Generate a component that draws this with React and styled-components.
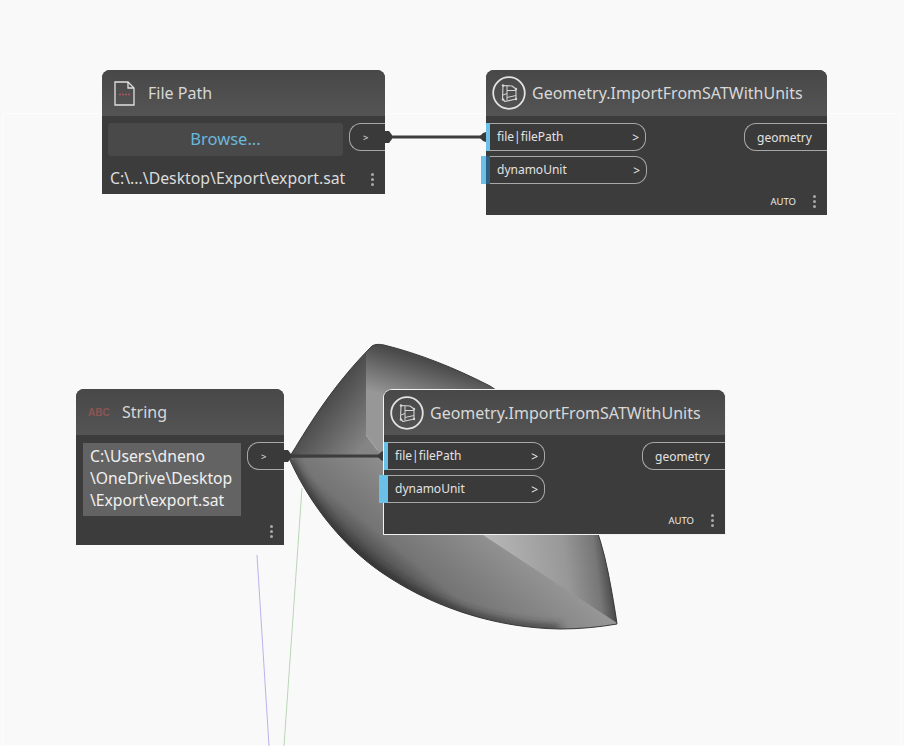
import React from "react";
import styled, { createGlobalStyle } from "styled-components";

const GlobalStyle = createGlobalStyle`
  html, body {
    margin: 0;
    padding: 0;
    background: #f9f9f9;
  }
`;

const Canvas = styled.div`
  position: relative;
  width: 904px;
  height: 746px;
  overflow: hidden;
  background: #f9f9f9;
  font-family: "Noto Sans", "Liberation Sans", sans-serif;

  &::before {
    content: "";
    position: absolute;
    left: 2px;
    right: 3px;
    top: 113px;
    bottom: 0;
    border: 1px solid #fdfdfd;
  }
`;

const Drawing = styled.svg`
  position: absolute;
  left: 0;
  top: 0;
`;

const Node = styled.div`
  position: absolute;
  left: ${(p) => p.$x}px;
  top: ${(p) => p.$y}px;
  width: ${(p) => p.$w}px;
  height: ${(p) => p.$h}px;
  display: flex;
  flex-direction: column;
  background: #3c3c3c;
  border-radius: 8px 8px 0 0;
  box-shadow: ${(p) => (p.$selected ? "0 0 0 1px #f2f2f2" : "none")};
  color: #e6e6e6;
`;

const Header = styled.div`
  height: ${(p) => p.$h || 46}px;
  flex: none;
  display: flex;
  align-items: center;
  gap: ${(p) => p.$gap}px;
  padding-left: ${(p) => p.$pad}px;
  box-sizing: border-box;
  border-radius: 8px 8px 0 0;
  background: linear-gradient(#484848, #545454);
`;

const Title = styled.span`
  font-size: 16px;
  color: #d8d8d8;
  white-space: nowrap;
`;

const Body = styled.div`
  flex: 1;
  display: flex;
  flex-direction: column;
  min-height: 0;
`;

const Row = styled.div`
  display: flex;
  justify-content: space-between;
  align-items: flex-start;
  padding-top: 7px;
`;

const Ports = styled.div`
  display: flex;
  flex-direction: column;
  gap: 5px;
`;

const InPort = styled.div`
  width: ${(p) => p.$w}px;
  height: 28px;
  margin-left: ${(p) => (p.$sticking ? -5 : 0)}px;
  box-sizing: border-box;
  display: flex;
  align-items: center;
  padding-right: 6px;
  border: 1px solid #a8a8a8;
  border-left: none;
  border-radius: 0 12px 12px 0;
  background: #3a3a3a;
  font-size: 12px;
  color: #e2e2e2;
`;

const PortBar = styled.div`
  flex: none;
  align-self: stretch;
  margin: -1px 0;
  width: ${(p) => (p.$sticking ? 9 : 4)}px;
  background: ${(p) =>
    p.$dim
      ? "linear-gradient(to right, #6ac0e7 5px, #2f5f80 5px)"
      : "#6ac0e7"};
`;

const PortLabel = styled.span`
  margin: 0 auto 1px 7px;
`;

const Chevron = styled.span`
  font-size: 12px;
  color: #ededed;
`;

const OutPort = styled.div`
  height: 28px;
  width: ${(p) => p.$w}px;
  flex: none;
  box-sizing: border-box;
  display: flex;
  align-items: center;
  padding-left: ${(p) => p.$pad}px;
  border: 1px solid #a8a8a8;
  border-right: none;
  border-radius: 12px 0 0 12px;
  background: #3a3a3a;
  font-size: ${(p) => p.$size}px;
  color: #e2e2e2;
`;

const BrowseRow = styled.div`
  display: flex;
  justify-content: space-between;
  align-items: flex-start;
  padding: 7px 0 0 6px;
`;

const BrowseButton = styled.div`
  width: 235px;
  height: 33px;
  padding-bottom: 2px;
  box-sizing: border-box;
  display: flex;
  align-items: center;
  justify-content: center;
  border-radius: 3px;
  background: #494949;
  color: #6ab7dc;
  font-size: 16.5px;
`;

const PathRow = styled.div`
  display: flex;
  justify-content: space-between;
  align-items: center;
  padding: 11px 11px 0 8px;
  font-size: 15.8px;
  color: #dcdcdc;
  white-space: nowrap;
`;

const StringRow = styled.div`
  display: flex;
  justify-content: space-between;
  align-items: flex-start;
  padding: 7px 0 0 7px;
`;

const StringBox = styled.div`
  width: 158px;
  height: 73px;
  margin-top: 1px;
  box-sizing: border-box;
  padding: 2px 0 0 7px;
  background: #636363;
  font-size: 15.7px;
  line-height: 22px;
  color: #f0f0f0;
  white-space: nowrap;
`;

const Footer = styled.div`
  margin-top: auto;
  display: flex;
  align-items: center;
  justify-content: flex-end;
  gap: 17px;
  height: 28px;
  padding-right: 11px;
  font-size: 9.5px;
  color: #ececec;
`;

const Dots = styled.div`
  display: flex;
  flex-direction: column;
  gap: 2px;
  margin-top: ${(p) => p.$drop || 0}px;

  & > i {
    width: 3px;
    height: 3px;
    border-radius: 50%;
    background: #a9a9a9;
  }
`;

const AbcMark = styled.span`
  width: 21px;
  font-family: "Liberation Sans", sans-serif;
  font-weight: 700;
  font-size: 10px;
  color: #8c5553;
`;

const More = ({ drop }) => (
  <Dots $drop={drop}>
    <i />
    <i />
    <i />
  </Dots>
);

const FileIcon = () => (
  <svg width="21" height="25" viewBox="0 0 21 25" fill="none">
    <path d="M1 1H14L20 7V24H1Z" stroke="#e0e0e0" strokeWidth="1.3" />
    <path d="M14 1V7H20" stroke="#e0e0e0" strokeWidth="1.3" />
    <path d="M5 13.5H16" stroke="#b4505a" strokeWidth="1.6" strokeDasharray="2 1" />
  </svg>
);

const LibraryIcon = () => (
  <svg width="34" height="34" viewBox="0 0 34 34" fill="none">
    <circle cx="17" cy="17" r="15.8" stroke="#e2e2e2" strokeWidth="1.8" />
    <path
      d="M11 9.5L20 10L24 13V23L13 25.5L10.5 23Z"
      stroke="#d4d4d4"
      strokeWidth="1.1"
      strokeLinejoin="round"
    />
    <path d="M15 10V24.5M15 14.5H24M11 19L15 17.5M15 21.5L24 19.5" stroke="#d4d4d4" strokeWidth="1" />
    <circle cx="11" cy="9.5" r="1.2" fill="#d4d4d4" />
    <circle cx="24" cy="13" r="1.2" fill="#d4d4d4" />
    <circle cx="11" cy="23.5" r="1.2" fill="#d4d4d4" />
    <circle cx="24" cy="23" r="1.2" fill="#d4d4d4" />
  </svg>
);

const Solid =
  "M289 458 C305 432 330 388 372 346 C375 344 379 344 384 345 C420 354 455 368 490 386 C545 420 592 490 608 572 C612 592 615 610 617 624 C600 627 580 629 560 629 C500 628 440 610 390 578 C345 550 310 505 289 458 Z";

const Geometry = () => (
  <g>
    <defs>
      <clipPath id="solidClip">
        <path d={Solid} />
      </clipPath>
      <filter id="edgeBlur" x="-20%" y="-20%" width="140%" height="140%">
        <feGaussianBlur stdDeviation="4" />
      </filter>
      <linearGradient id="leftFacet" gradientUnits="userSpaceOnUse" x1="318" y1="402" x2="368" y2="442">
        <stop offset="0" stopColor="#464646" />
        <stop offset="1" stopColor="#858585" />
      </linearGradient>
      <linearGradient id="topFacet" gradientUnits="userSpaceOnUse" x1="385" y1="348" x2="372" y2="392">
        <stop offset="0" stopColor="#4a4a4a" />
        <stop offset="1" stopColor="#979797" />
      </linearGradient>
      <linearGradient id="lowerFacet" gradientUnits="userSpaceOnUse" x1="500" y1="530" x2="428" y2="617">
        <stop offset="0" stopColor="#969696" />
        <stop offset="0.7" stopColor="#747474" />
        <stop offset="1" stopColor="#3a3a3a" />
      </linearGradient>
      <linearGradient id="rightFacet" gradientUnits="userSpaceOnUse" x1="490" y1="545" x2="610" y2="530">
        <stop offset="0" stopColor="#b6b6b6" />
        <stop offset="0.6" stopColor="#989898" />
        <stop offset="0.85" stopColor="#777777" />
        <stop offset="1" stopColor="#383838" />
      </linearGradient>
    </defs>
    <g clipPath="url(#solidClip)">
      <path d="M280 450H640V640H280Z" fill="url(#lowerFacet)" />
      <path d="M483 535L620 625L640 440L440 440Z" fill="url(#rightFacet)" />
      <path d="M280 335H380L366 352V435L383 458H280Z" fill="url(#leftFacet)" />
      <path d="M366 352L378 335L520 380V458H383L366 435Z" fill="url(#topFacet)" />
      <path d="M289 458C310 505 345 550 390 578C440 610 500 628 560 629" fill="none" stroke="#2a2a2a" strokeWidth="6" filter="url(#edgeBlur)" />
    </g>
    <path d={Solid} fill="none" stroke="#3a3a3a" strokeWidth="1" />
  </g>
);

const App = () => (
  <Canvas>
    <GlobalStyle />
    <Drawing width="904" height="746">
      <Geometry />
      <path d="M257 555L269 746" stroke="#b9b3ec" strokeWidth="1" fill="none" />
      <path d="M302 488L284 746" stroke="#b9d6b6" strokeWidth="1" fill="none" />
    </Drawing>

    <Node $x={102} $y={70} $w={283} $h={124}>
      <Header $gap={13} $pad={12}>
        <FileIcon />
        <Title>File Path</Title>
      </Header>
      <Body>
        <BrowseRow>
          <BrowseButton>Browse...</BrowseButton>
          <OutPort $w={36} $pad={13} $size={9.5}>&gt;</OutPort>
        </BrowseRow>
        <PathRow>
          <span>C:\...\Desktop\Export\export.sat</span>
          <More drop={3} />
        </PathRow>
      </Body>
    </Node>

    <Node $x={486} $y={70} $w={341} $h={145}>
      <Header $gap={6} $pad={6}>
        <LibraryIcon />
        <Title>Geometry.ImportFromSATWithUnits</Title>
      </Header>
      <Body>
        <Row>
          <Ports>
            <InPort $w={160}>
              <PortBar />
              <PortLabel>file|filePath</PortLabel>
              <Chevron>&gt;</Chevron>
            </InPort>
            <InPort $w={166} $sticking>
              <PortBar $sticking $dim />
              <PortLabel>dynamoUnit</PortLabel>
              <Chevron>&gt;</Chevron>
            </InPort>
          </Ports>
          <OutPort $w={83} $pad={12} $size={12}>geometry</OutPort>
        </Row>
        <Footer>
          AUTO
          <More />
        </Footer>
      </Body>
    </Node>

    <Node $x={76} $y={389} $w={208} $h={156}>
      <Header $gap={13} $pad={12}>
        <AbcMark>ABC</AbcMark>
        <Title>String</Title>
      </Header>
      <Body>
        <StringRow>
          <StringBox>
            C:\Users\dneno
            <br />
            \OneDrive\Desktop
            <br />
            \Export\export.sat
          </StringBox>
          <OutPort $w={37} $pad={13} $size={9.5}>&gt;</OutPort>
        </StringRow>
        <Footer>
          <More />
        </Footer>
      </Body>
    </Node>

    <Node $x={384} $y={390} $w={341} $h={144} $selected>
      <Header $h={45} $gap={6} $pad={6}>
        <LibraryIcon />
        <Title>Geometry.ImportFromSATWithUnits</Title>
      </Header>
      <Body>
        <Row>
          <Ports>
            <InPort $w={161}>
              <PortBar />
              <PortLabel>file|filePath</PortLabel>
              <Chevron>&gt;</Chevron>
            </InPort>
            <InPort $w={166} $sticking>
              <PortBar $sticking />
              <PortLabel>dynamoUnit</PortLabel>
              <Chevron>&gt;</Chevron>
            </InPort>
          </Ports>
          <OutPort $w={83} $pad={12} $size={12}>geometry</OutPort>
        </Row>
        <Footer>
          AUTO
          <More />
        </Footer>
      </Body>
    </Node>

    <Drawing width="904" height="746">
      <path d="M388 137H483" stroke="#3d3d3d" strokeWidth="3" />
      <path d="M385 131H389L392 135V139L389 143H385Z" fill="#3a3a3a" />
      <path d="M486 132L483 133L480 136V138L483 141L486 142Z" fill="#3a3a3a" />
      <path d="M288 456H382" stroke="#3d3d3d" strokeWidth="3" />
      <path d="M284 450H288L291 454V458L288 462H284Z" fill="#3a3a3a" />
      <path d="M383 451L381 452L378 455V457L381 460L383 461Z" fill="#3a3a3a" />
    </Drawing>
  </Canvas>
);

export default App;
